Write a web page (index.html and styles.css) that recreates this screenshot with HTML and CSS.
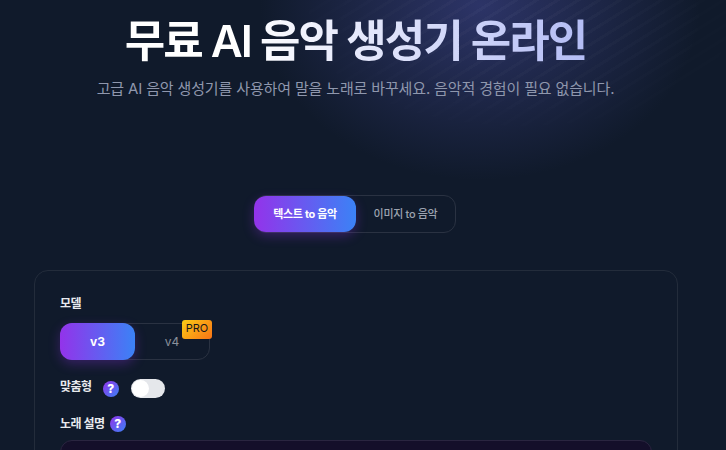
FILE: index.html
```html
<!DOCTYPE html>
<html lang="ko">
  <head>
    <meta charset="UTF-8" />
    <meta name="viewport" content="width=device-width, initial-scale=1.0" />
    <title>무료 AI 음악 생성기 온라인</title>
    <link rel="stylesheet" href="styles.css">
  </head>
  <body>
    <section class="hero">
      <h1>무료 AI 음악 생성기 온라인</h1>
      <p>고급 AI 음악 생성기를 사용하여 말을 노래로 바꾸세요. 음악적 경험이 필요 없습니다.</p>
    </section>

    <div class="mode-tabs">
      <button class="mode-tab active">텍스트 to 음악</button>
      <button class="mode-tab">이미지 to 음악</button>
    </div>

    <section class="card">
      <div class="field-label">모델</div>
      <div class="model-tabs">
        <button class="model-tab active">v3</button>
        <button class="model-tab">v4</button>
        <span class="pro-badge">PRO</span>
      </div>

      <div class="custom-row">
        <span class="field-label">맞춤형</span>
        <span class="help">?</span>
        <span class="switch"><span class="knob"></span></span>
      </div>

      <div class="desc-row">
        <span class="field-label">노래 설명</span>
        <span class="help">?</span>
      </div>
      <div class="textarea"></div>
    </section>
  </body>
</html>
```

FILE: styles.css
```css
/* Reset */
* {
  margin: 0;
  padding: 0;
  box-sizing: border-box;
  font-family: Inter, "Noto Sans CJK KR", sans-serif;
}

html,
body {
  height: 450px;
  overflow: hidden;
}

body {
  background-color: #101a2b;
  color: #fff;
}

/* Hero (page is 711px wide, the rest is the scrollbar gutter) */
.hero {
  position: relative;
  height: 195px;
  padding: 14px 15px 0 0;
  text-align: center;
  background: radial-gradient(ellipse 220px 175px at 480px 5px, rgba(62, 68, 140, 0.62), transparent);
}

/* Faint diagonal streaks, only around the glow */
.hero::before {
  content: "";
  position: absolute;
  top: 0;
  left: 0;
  width: 100%;
  height: 100%;
  background: repeating-linear-gradient(-32deg, rgba(255, 255, 255, 0.03) 0 3px, transparent 3px 11px);
  -webkit-mask-image: radial-gradient(ellipse 260px 130px at 520px 20px, #000, transparent);
  mask-image: radial-gradient(ellipse 260px 130px at 520px 20px, #000, transparent);
}

.hero h1,
.hero p {
  position: relative;
}

.hero h1 {
  display: inline-block;
  font-size: 44px;
  line-height: 54px;
  font-weight: 600;
  letter-spacing: -0.045em;
  background: linear-gradient(90deg, #ffffff 25%, #b4bdf5 100%);
  -webkit-background-clip: text;
  background-clip: text;
  color: transparent;
}

.hero p {
  margin-top: 9px;
  font-size: 15px;
  line-height: 24px;
  letter-spacing: -0.01em;
  color: #8f97ad;
}

/* Tabs */
.mode-tabs {
  display: flex;
  width: 202px;
  height: 38px;
  margin: 0 0 0 254px;
  border: 1px solid #2a3242;
  border-radius: 12px;
}

.mode-tab {
  flex: 1;
  padding-bottom: 3px;
  border: none;
  background: none;
  color: #9ca3af;
  font-size: 11px;
  font-weight: 500;
  letter-spacing: -0.03em;
  border-radius: 12px;
}

.mode-tab.active {
  flex: none;
  width: 102px;
  height: 36px;
  margin-left: -1px;
  color: #fff;
  font-weight: 700;
  background: linear-gradient(90deg, #9333ea, #3b82f6);
  box-shadow: 0 4px 12px rgba(147, 51, 234, 0.3);
}

/* Card */
.card {
  width: 644px;
  height: 300px;
  margin: 37px 0 0 34px;
  padding: 25px 25px 25px;
  border: 1px solid #232c3b;
  border-radius: 14px;
}

.field-label {
  font-size: 12px;
  line-height: 16px;
  font-weight: 700;
  letter-spacing: -0.04em;
  color: #e8eaee;
}

.model-tabs {
  position: relative;
  display: flex;
  width: 150px;
  height: 37px;
  margin-top: 11px;
  border: 1px solid #2a3242;
  border-radius: 12px;
}

.model-tab {
  flex: 1;
  padding-bottom: 1px;
  border: none;
  background: none;
  color: #8b919c;
  font-size: 12px;
  font-weight: 400;
  border-radius: 12px;
}

.model-tab.active {
  flex: none;
  width: 75px;
  height: 37px;
  margin: -1px 0 0 -1px;
  color: #fff;
  font-weight: 700;
  background: linear-gradient(90deg, #9333ea, #3b82f6);
  box-shadow: 0 4px 12px rgba(147, 51, 234, 0.3);
}

.pro-badge {
  position: absolute;
  top: -4px;
  right: -3px;
  width: 30px;
  height: 19px;
  border-radius: 3px;
  background: linear-gradient(135deg, #facc15, #f97316);
  color: #17181c;
  font-size: 11px;
  line-height: 17px;
  text-align: center;
}

.custom-row,
.desc-row {
  display: flex;
  align-items: center;
}

.custom-row {
  margin-top: 19px;
}

.custom-row .field-label {
  margin-bottom: 3px;
}

.desc-row {
  margin-top: 18px;
}

.help {
  width: 16px;
  height: 16px;
  border-radius: 50%;
  background: linear-gradient(135deg, #9333ea, #3b82f6);
  color: #fff;
  font-size: 12px;
  line-height: 16px;
  font-weight: 800;
  text-align: center;
}

.custom-row .help {
  margin-left: 11px;
}

.desc-row .help {
  margin-left: 5px;
}

.switch {
  display: block;
  width: 34px;
  height: 19px;
  margin-left: 12px;
  padding: 1px;
  border-radius: 10px;
  background-color: #e5e7eb;
}

.knob {
  display: block;
  width: 17px;
  height: 17px;
  border-radius: 50%;
  background-color: #fff;
}

.textarea {
  width: 592px;
  height: 100px;
  margin-top: 8px;
  border: 1px solid #2a2540;
  border-radius: 12px;
  background-color: #140f2a;
}
```
